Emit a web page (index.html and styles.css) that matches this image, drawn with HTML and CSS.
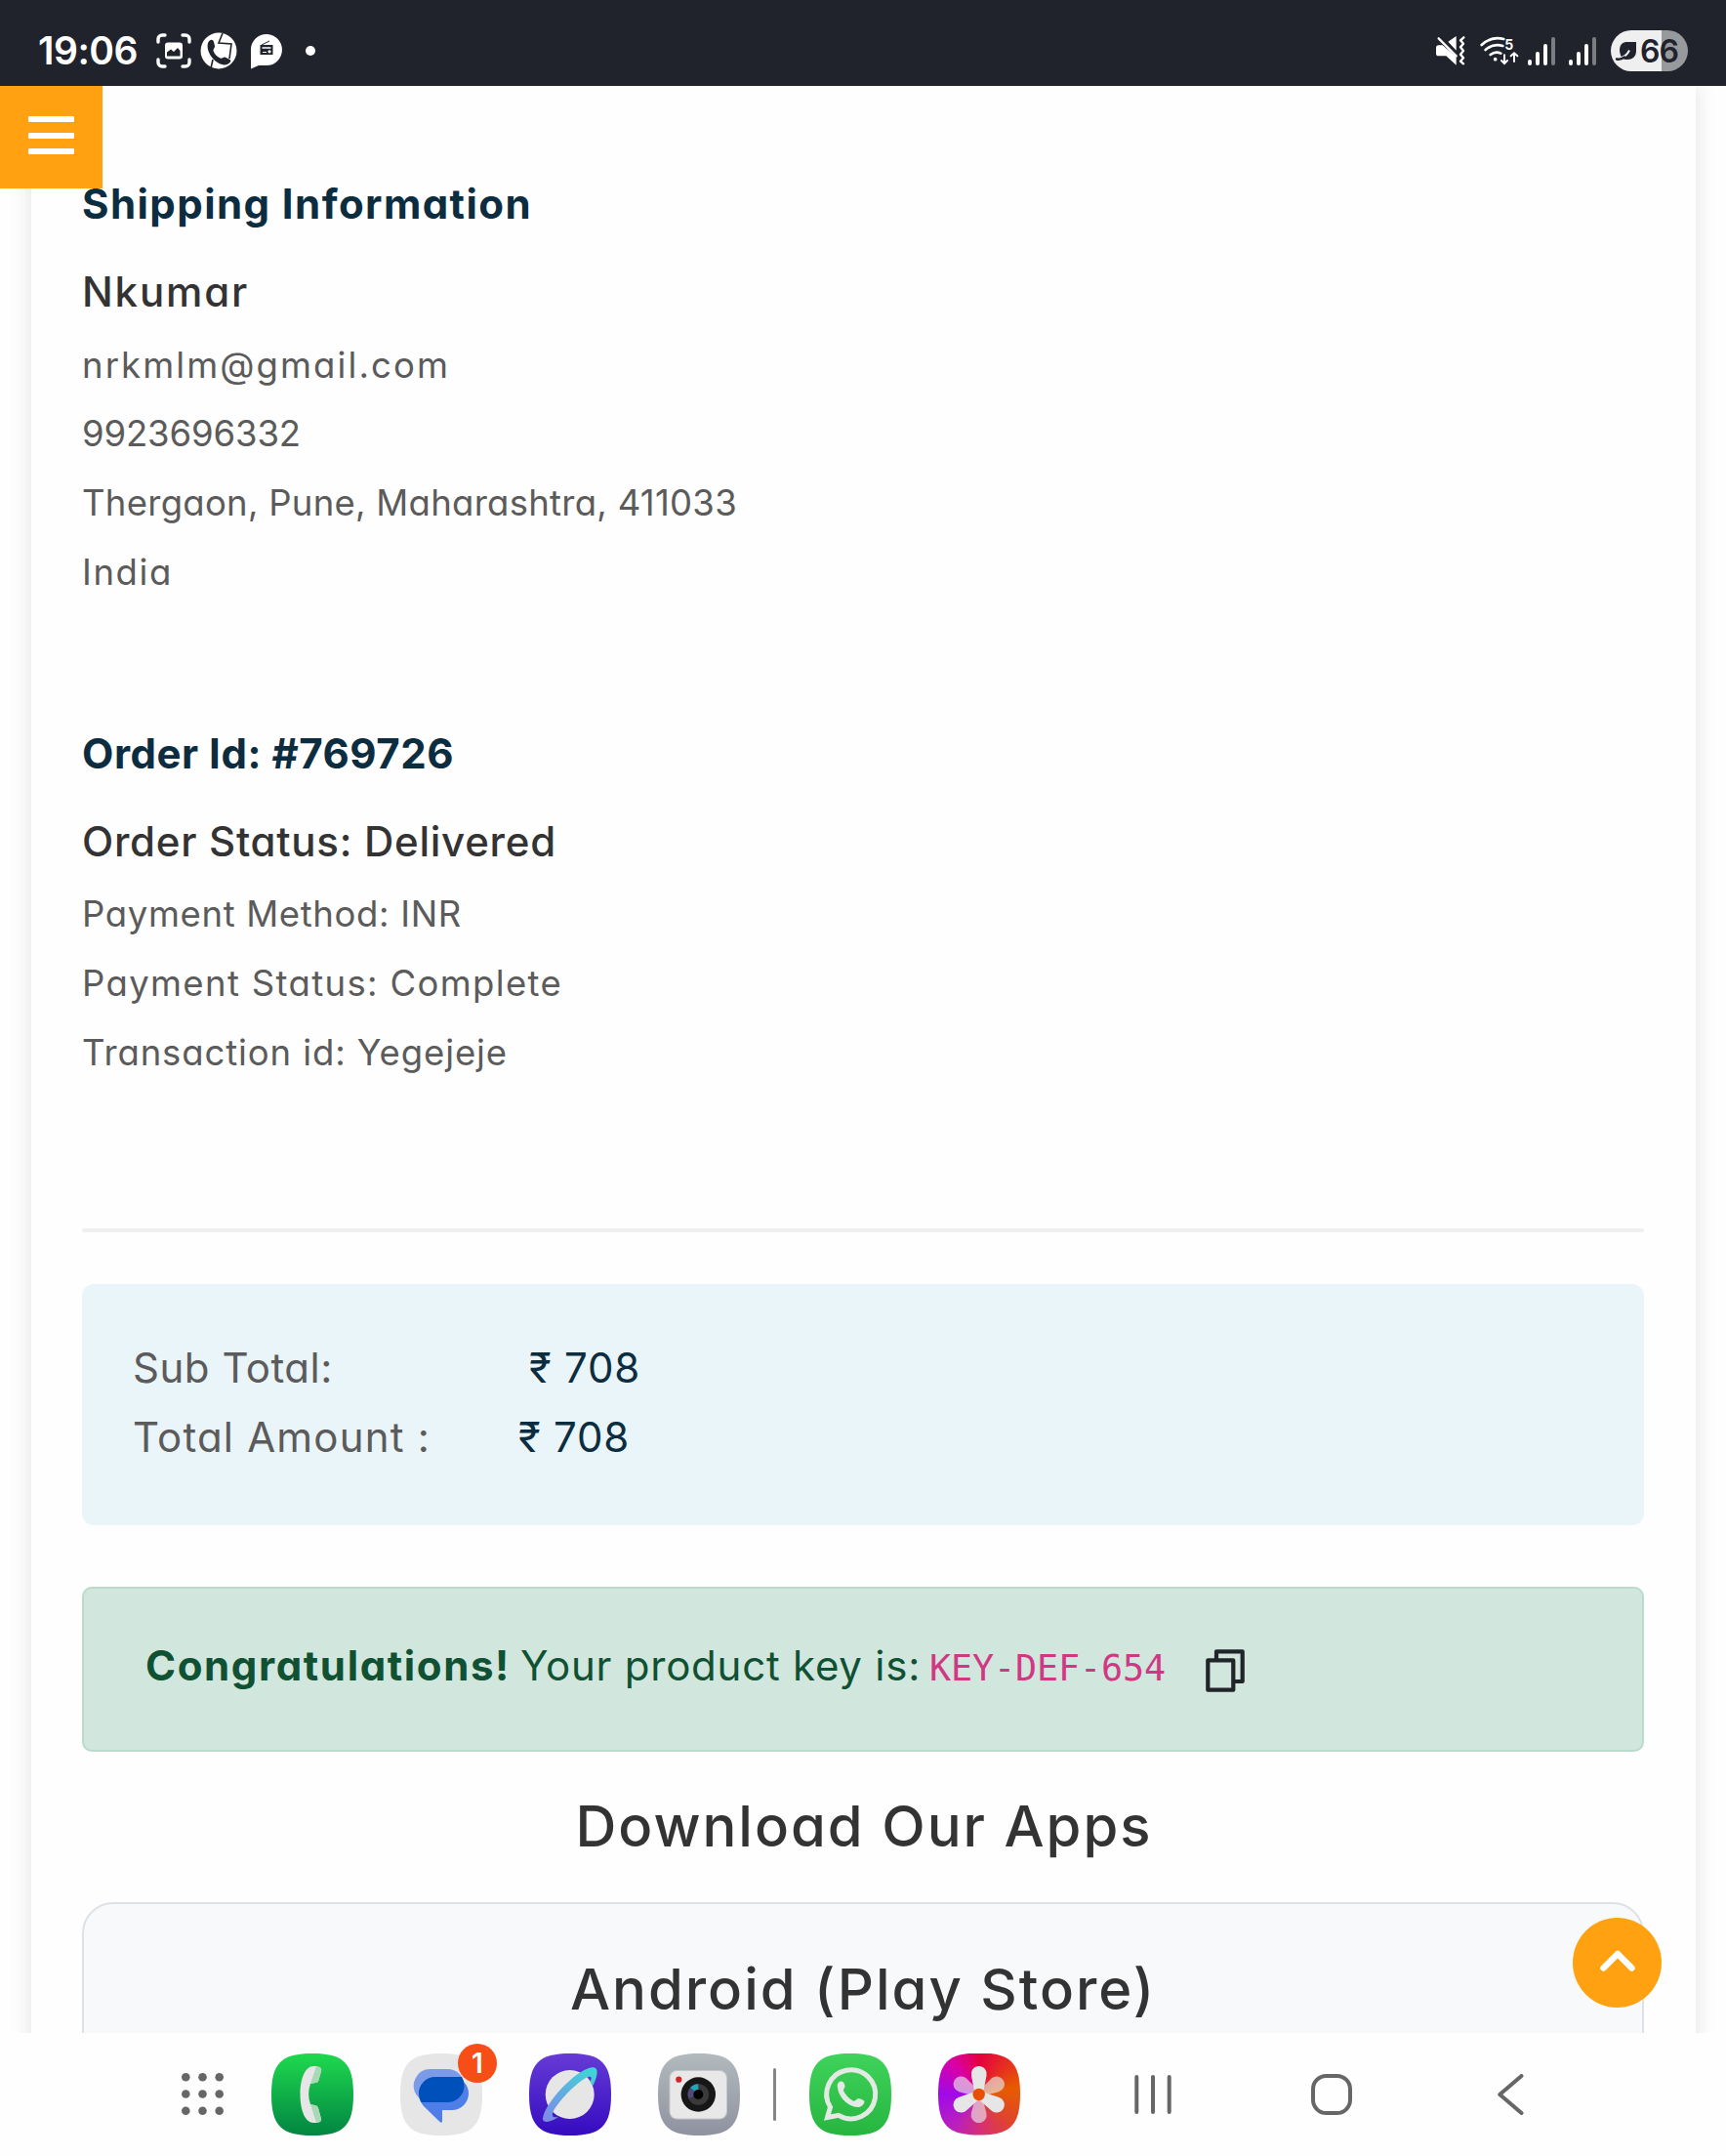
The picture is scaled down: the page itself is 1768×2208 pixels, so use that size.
FILE: index.html
```
<!DOCTYPE html>
<html lang="en">
<head>
<meta charset="utf-8">
<title>Order Details</title>
<link rel="stylesheet" href="styles.css">
</head>
<body>
<header class="status-bar">
  <div class="status-left">
    <span class="clock">19:06</span>
    <svg class="capture" width="36" height="36" viewBox="0 0 36 36" fill="none" stroke="#fff" stroke-width="3.4" stroke-linecap="round">
      <path d="M2 9V6a4 4 0 0 1 4-4h3M27 2h3a4 4 0 0 1 4 4v3M34 27v3a4 4 0 0 1-4 4h-3M9 34H6a4 4 0 0 1-4-4v-3"/>
      <rect x="9" y="9.500" width="18" height="17" rx="3" fill="#fff" stroke="none"/>
      <path d="M11 23.500v-4l4-3 3 2.500 4-4 2.500 3v5.500z" fill="#20222c" stroke="none"/>
    </svg>
    <svg class="call" width="38" height="38" viewBox="0 0 38 38">
      <circle cx="19" cy="19" r="18.500" fill="#fff"/>
      <path d="M8 11c2-4 5-4 6-1l1 4c.5 2-2 3-1.500 5 1.500 4 4 6 7 7.500 2 1 3-1.500 5-1l5 2.500c2 1 0 4-3 5C19 36 5 22 8 11z" fill="#20222c"/>
      <path d="M23 1l-4 10 13 1-2 15M13 28l-2 9" fill="none" stroke="#20222c" stroke-width="1.600"/>
    </svg>
    <svg class="radio" width="34" height="37" viewBox="0 0 34 37">
      <path d="M1 36.500V16A16 16 0 1 1 17 33H9z" fill="#fff"/>
      <path d="M10.500 12h13v10h-13z" fill="#20222c"/>
      <path d="M12 12l8-4" stroke="#20222c"/>
      <path d="M12.500 15h9" stroke="#fff" stroke-width="1.500"/>
      <circle cx="20" cy="18.800" r="1.600" fill="#fff"/><path d="M13 19.500h4" stroke="#fff"/>
    </svg>
    <span class="more-dot"></span>
  </div>
  <div class="status-right">
    <svg class="mute" width="30" height="30" viewBox="93 110 90 90" fill="#fff">
      <path d="M130 127l25-17v44zM93 146q0-8 8-8h12l42 36v25l-31-28h-23q-8 0-8-8z"/>
      <path d="M106 112l56 54" stroke="#20222c" stroke-width="5"/>
      <path d="M101 117l54 54" stroke="#fff" stroke-width="7" stroke-linecap="round"/>
      <path d="M178 114l-10 9 9 10-9 11 9 11-9 11 9 11-9 10 9 8" fill="none" stroke="#fff" stroke-width="7" stroke-linecap="round" stroke-linejoin="round"/>
    </svg>
    <svg class="wifi" width="40" height="30" viewBox="228 112 120 90" fill="none" stroke="#fff" stroke-width="8" stroke-linecap="round">
      <path d="M233 139q30-28 68-18M245 154q24-21 53-12M260 169q16-12 32-4"/>
      <circle cx="275" cy="183" r="5.500" fill="#fff" stroke="none"/>
      <path d="M303 170v25m-9-8l9 9 9-9M333 190v-26m-10 9l10-9 10 9" stroke-width="6"/>
      <text x="304" y="153" class="wifi-gen">5</text>
    </svg>
    <svg class="signal" width="28" height="29" viewBox="0 0 28 29" stroke="#fff" stroke-width="4" stroke-linecap="round">
      <path d="M2 25v2M10 17v10M18 9v18"/><path d="M26 2v25" stroke="#7c7d83"/>
    </svg>
    <svg class="signal second" width="28" height="29" viewBox="0 0 28 29" stroke="#fff" stroke-width="4" stroke-linecap="round">
      <path d="M2 25v2M10 17v10M18 9v18"/><path d="M26 2v25" stroke="#7c7d83"/>
    </svg>
    <div class="battery">
      <svg width="23" height="21" viewBox="0 0 23 21">
        <path d="M22 1v9c0 6-4 9-9 9-2 0-4-.5-5.500-1.500C4 12 3 1 13 1z" fill="#20222c"/>
        <path d="M4 17.500c5-.5 9-3.500 11-8" fill="none" stroke="#efefef" stroke-width="2"/>
        <path d="M2 18.500c3 .5 6-.5 8-2" fill="none" stroke="#20222c" stroke-width="2.500" stroke-linecap="round"/>
      </svg>
      <span>66</span>
    </div>
  </div>
</header>

<main class="viewport">
  <button class="menu-button" aria-label="Menu"><i></i><i></i><i></i></button>
  <div class="panel">
    <section class="info">
      <h2 class="title shipping">Shipping Information</h2>
      <h3 class="subtitle name">Nkumar</h3>
      <p class="email">nrkmlm@gmail.com</p>
      <p class="phone">9923696332</p>
      <p class="address">Thergaon, Pune, Maharashtra, 411033</p>
      <p class="country">India</p>
    </section>
    <section class="info order">
      <h2 class="title order-id">Order Id: #769726</h2>
      <h3 class="subtitle order-status">Order Status: Delivered</h3>
      <p class="method">Payment Method: INR</p>
      <p class="payment">Payment Status: Complete</p>
      <p class="transaction">Transaction id: Yegejeje</p>
    </section>
    <hr>
    <section class="totals">
      <div class="row"><span class="label sub">Sub Total:</span><span class="amount">₹ 708</span></div>
      <div class="row"><span class="label total">Total Amount :</span><span class="amount">₹ 708</span></div>
    </section>
    <section class="alert">
      <strong>Congratulations!</strong>
      <span class="message">Your product key is:</span>
      <code>KEY-DEF-654</code>
      <svg class="copy" width="40" height="44" viewBox="0 0 40 44" fill="none" stroke="#212529" stroke-width="4.200" stroke-linejoin="round">
        <path d="M11 10V2.300h26.700V33H29"/><path d="M2.300 11.300h26v30.400h-26z"/>
      </svg>
    </section>
    <h2 class="apps-title">Download Our Apps</h2>
    <section class="app-card"><h2>Android (Play Store)</h2></section>
  </div>
  <button class="to-top" aria-label="Back to top">
    <svg width="38" height="24" viewBox="0 0 38 24" fill="none" stroke="#fff" stroke-width="6.400" stroke-linecap="round" stroke-linejoin="round"><path d="M4.500 19.500L19 5l14.500 14.500"/></svg>
  </button>
</main>

<nav class="dock">
  <svg class="apps" width="43" height="43" viewBox="0 0 43 43" fill="#666">
    <circle cx="4.300" cy="4.300" r="4.300"/><circle cx="21.500" cy="4.300" r="4.300"/><circle cx="38.700" cy="4.300" r="4.300"/>
    <circle cx="4.300" cy="21.500" r="4.300"/><circle cx="21.500" cy="21.500" r="4.300"/><circle cx="38.700" cy="21.500" r="4.300"/>
    <circle cx="4.300" cy="38.700" r="4.300"/><circle cx="21.500" cy="38.700" r="4.300"/><circle cx="38.700" cy="38.700" r="4.300"/>
  </svg>
  <svg class="app" viewBox="0 0 84 84">
    <defs><linearGradient id="green" x2="0" y2="1"><stop stop-color="#1fd94e"/><stop offset="1" stop-color="#018542"/></linearGradient></defs>
    <path d="M0 42C0 10 10 0 42 0S84 10 84 42 74 84 42 84 0 74 0 42z" fill="url(#green)"/>
    <path d="M43 13C35 13 29.500 25 29.500 42S35 71 43 71c5 .5 8.500-1 8-4l-3-11c-.5-2-2-3-4-3l-4-1c-2.500-7-2.500-14 0-21l5-1c2 0 3-1 3.500-3L51 18c1-3-2-5-8-5z" fill="#e6e6e6"/>
    <path d="M46 13.300c4 .2 6 1.700 5 4.700l-2.500 9c-.5 2-1.500 3-3.500 3l-5 1zM40 52l4 1c2 0 3.500 1 4 3l3 11c.5 2-1 3.500-5 3.900z" fill="#a8d8b5"/>
  </svg>
  <div class="badged">
    <svg class="app" viewBox="0 0 84 84">
      <path d="M0 42C0 10 10 0 42 0S84 10 84 42 74 84 42 84 0 74 0 42z" fill="#e6e6e6"/>
      <path d="M31 16h17.500a17 17 0 0 1 17 17v17H24L17 43a17 17 0 0 1 14-27z" fill="#7b9be8"/>
      <path d="M36 24h17a17 17 0 0 1 0 34H43v11q0 3-2.500 1L24 54q-5-6-5-13a17 17 0 0 1 17-17z" fill="#4f7ee8"/>
      <path d="M36 24h27q2.500 4 2.500 9a17 17 0 0 1-17 17H21.500Q19 46 19 41a17 17 0 0 1 17-17z" fill="#0050bb"/>
    </svg>
    <span class="badge">1</span>
  </div>
  <svg class="app" viewBox="0 0 84 84">
    <defs>
      <linearGradient id="violet" x2="0" y2="1"><stop stop-color="#663bd6"/><stop offset="1" stop-color="#350bc0"/></linearGradient>
      <linearGradient id="ring" x1="0" y1="1" x2="1" y2="0"><stop stop-color="#8186e8"/><stop offset="1" stop-color="#38dcd4"/></linearGradient>
    </defs>
    <path d="M0 42C0 10 10 0 42 0S84 10 84 42 74 84 42 84 0 74 0 42z" fill="url(#violet)"/>
    <circle cx="41.700" cy="42" r="25" fill="#e6e6e6"/>
    <path d="M14.500 64C18 50 46 18 64 14.300c7-1 7.500 6 1.500 18.500L62.500 29c2.500-5 .5-6.500-3.500-4.500C48 30 29 50 24.500 60c-2 5 1 6.500 6 4.500l-2 1.500C19 71.500 12 71.500 14.500 64z" fill="url(#ring)"/>
  </svg>
  <svg class="app" viewBox="0 0 84 84">
    <defs><linearGradient id="steel" x2="0" y2="1"><stop stop-color="#b2babd"/><stop offset="1" stop-color="#8f929f"/></linearGradient></defs>
    <path d="M0 42C0 10 10 0 42 0S84 10 84 42 74 84 42 84 0 74 0 42z" fill="url(#steel)"/>
    <rect x="11.500" y="17" width="59.500" height="50.500" rx="8" fill="#c4c8cc"/>
    <rect x="12.500" y="18" width="57.500" height="48.500" rx="7" fill="#e8e8e8"/>
    <circle cx="21.300" cy="26.700" r="3.100" fill="#d3262c"/>
    <circle cx="41.300" cy="42" r="17.700" fill="#171718"/>
    <circle cx="41.300" cy="42" r="10.800" fill="#3b393c"/>
    <path d="M41.300 42V31.200A10.800 10.800 0 0 0 33 35z" fill="#1ea8bb"/>
    <path d="M41.300 42L33 35a10.800 10.800 0 0 0-1.500 11z" fill="#504a78"/>
    <circle cx="41.300" cy="42" r="5" fill="#000"/>
  </svg>
  <span class="divider"></span>
  <svg class="app" viewBox="0 0 84 84">
    <defs><linearGradient id="lime" x2="0" y2="1"><stop stop-color="#3fd35b"/><stop offset="1" stop-color="#27b53f"/></linearGradient></defs>
    <path d="M0 42C0 10 10 0 42 0S84 10 84 42 74 84 42 84 0 74 0 42z" fill="url(#lime)"/>
    <path d="M18.500 65.500l3-10.500A25 25 0 1 1 30 63.300z" fill="none" stroke="#e2eae3" stroke-width="5"/>
    <path d="M29 35c-1-4 1-6.500 4-6.500 2 0 3 2.500 3.500 4.500s-2 3.500-1.500 5c2 4.500 6 8.500 10 10.500 2 1 3.500-2.500 5.500-2.500 2 .3 5.500 2 6 3-.5 4-4 6-7 6C40 54.500 30 45 29 35z" fill="#e2eae3"/>
  </svg>
  <div class="app gallery">
    <svg class="app" viewBox="0 0 84 84" fill="#e6e6e6">
      <g fill-opacity=".65">
        <path d="M38 38l-4-15a8 8 0 1 1 15.500 0l-4 15z" transform="rotate(60 41.700 42)"/>
        <path d="M38 38l-4-15a8 8 0 1 1 15.500 0l-4 15z" transform="rotate(180 41.700 42)"/>
        <path d="M38 38l-4-15a8 8 0 1 1 15.500 0l-4 15z" transform="rotate(300 41.700 42)"/>
      </g>
      <path d="M37 38l-3-15a8 8 0 1 1 15.500 0l-3 15z"/>
      <path d="M37 38l-3-15a8 8 0 1 1 15.500 0l-3 15z" transform="rotate(120 41.700 42)"/>
      <path d="M37 38l-3-15a8 8 0 1 1 15.500 0l-3 15z" transform="rotate(240 41.700 42)"/>
      <circle cx="41.700" cy="42" r="6.200" fill="#e65000"/>
    </svg>
  </div>
  <svg class="recents" width="38" height="40" viewBox="0 0 38 40" stroke="#666" stroke-width="4" stroke-linecap="round"><path d="M2.300 2v36M19 2v36M35.700 2v36"/></svg>
  <svg class="home" width="42" height="42" viewBox="0 0 42 42" fill="none" stroke="#666" stroke-width="4"><rect x="2" y="2" width="38" height="38" rx="13.500"/></svg>
  <svg class="back" width="27" height="42" viewBox="0 0 27 42" fill="none" stroke="#666" stroke-width="4" stroke-linecap="round" stroke-linejoin="round"><path d="M24.500 2L2.300 21l22.200 19"/></svg>
</nav>
</body>
</html>
```
FILE: styles.css
```
* { box-sizing: border-box; }

body {
  margin: 0;
  width: 1768px;
  height: 2208px;
  display: flex;
  flex-direction: column;
  overflow: hidden;
  background: #fefefe;
  font-family: Inter, "Noto Sans", sans-serif;
  font-feature-settings: "cv11";
  color: #333;
}

h2, h3, p { margin: 0; white-space: nowrap; }
svg { display: block; flex: none; }
button { border: 0; padding: 0; background: #ffa110; }

/* Status bar */
.status-bar {
  flex: none;
  height: 88px;
  padding: 16px 39px 0 39px;
  display: flex;
  align-items: center;
  justify-content: space-between;
  background: #20222c;
  color: #fff;
}
.status-left, .status-right { display: flex; align-items: center; }
.clock { width: 121px; font-size: 39px; font-weight: 600; line-height: 40px; letter-spacing: -0.5px; }
.call { margin-left: 9px; }
.radio { margin-left: 13px; }
.more-dot { width: 10px; height: 10px; margin-left: 23px; border-radius: 50%; background: #fff; }
.wifi { margin-left: 15px; }
.wifi-gen { font: 700 42px Inter, sans-serif; fill: #fff; stroke: none; }
.signal { margin-left: 9px; }
.second { margin-left: 14px; }
.battery {
  width: 79px;
  height: 42px;
  margin-left: 15px;
  padding-left: 4px;
  display: flex;
  align-items: center;
  gap: 3px;
  border-radius: 21px;
  background: linear-gradient(90deg, #efefef 52px, #98999d 52px);
  color: #20222c;
  font-size: 32px;
  font-weight: 600;
  letter-spacing: -1px;
}

/* Page */
.viewport { position: relative; flex: 1; min-height: 0; overflow: hidden; }
.menu-button {
  position: absolute;
  z-index: 2;
  left: 0;
  top: 0;
  width: 105px;
  height: 105px;
  padding: 31px 29px 35px;
  display: flex;
  flex-direction: column;
  justify-content: space-between;
}
.menu-button i { height: 6px; border-radius: 1px; background: #fff; }
.panel {
  height: 2100px;
  margin: 0 31px 0 32px;
  padding: 89px 53px 0 52px;
  background: #fefefe;
  box-shadow: 0 0 20px rgba(40, 40, 80, 0.13);
}

.info { color: #5b5b5b; font-size: 36.5px; line-height: 70.7px; }
.order { margin-top: 118.5px; }
.title { margin-bottom: 26px; font-size: 42px; line-height: 64px; font-weight: 700; color: #0c2d3f; }
.subtitle { margin-bottom: 7.5px; font-size: 42px; line-height: 64px; font-weight: 500; color: #333; }
.shipping { letter-spacing: 1.43px; }
.name { letter-spacing: 1.83px; }
.email { letter-spacing: 2.09px; }
.phone { letter-spacing: -0.14px; }
.address { letter-spacing: 0.27px; }
.country { letter-spacing: 1.62px; }
.order-id { letter-spacing: 0.52px; }
.order-status { letter-spacing: 0.73px; }
.method { letter-spacing: 0.65px; }
.payment { letter-spacing: 1.35px; }
.transaction { letter-spacing: 0.89px; }

hr { height: 4px; margin: 145px 0 53px; border: 0; border-radius: 2px; background: #efeff0; }

.totals {
  height: 247px;
  padding: 50px 52px 0;
  border-radius: 12px;
  background: #eaf5fa;
  font-size: 42px;
  line-height: 71px;
}
.row { display: flex; white-space: nowrap; }
.label { color: #5b5b5b; }
.sub { width: 406px; letter-spacing: 0.53px; }
.total { width: 395px; letter-spacing: 1.19px; }
.amount { color: #0c2d3f; letter-spacing: 0.78px; }

.alert {
  height: 169px;
  margin-top: 63px;
  padding: 0 63px 8px;
  display: flex;
  align-items: center;
  border: 2px solid #badbcc;
  border-radius: 10px;
  background: #d1e7dd;
  color: #0f5132;
  font-size: 42px;
  line-height: 64px;
  white-space: nowrap;
}
.alert strong { width: 384px; font-weight: 700; letter-spacing: 1.63px; }
.message { width: 419px; letter-spacing: 0.77px; }
.alert code { width: 283px; margin-top: 7px; color: #d03884; font-family: "DejaVu Sans Mono", monospace; font-size: 36.75px; letter-spacing: -0.13px; }
.copy { margin-top: 10px; }

.apps-title, .app-card h2 { font-size: 58px; line-height: 80px; font-weight: 500; text-align: center; color: #333; letter-spacing: 2px; }
.apps-title { margin-top: 36px; padding-left: 2px; }
.app-card {
  height: 400px;
  margin-top: 38px;
  padding-top: 47px;
  border: 2px solid #dee1e6;
  border-radius: 32px;
  background: #f8f9fb;
}
.to-top {
  position: absolute;
  left: 1611px;
  top: 1876px;
  width: 91px;
  height: 92px;
  display: flex;
  align-items: center;
  justify-content: center;
  padding-bottom: 4px;
  border-radius: 50%;
}

/* Dock */
.dock {
  flex: none;
  height: 126px;
  padding: 0 0 1px 186px;
  display: flex;
  align-items: center;
  background: #fefefe;
}
.app { width: 84px; height: 84px; margin-left: 48px; }
.apps + .app { margin-left: 49px; }
.badged { position: relative; margin-left: 48px; }
.badged .app { margin: 0; }
.badge {
  position: absolute;
  left: 59px;
  top: -10px;
  width: 40px;
  height: 40px;
  border-radius: 50%;
  background: #f64e16;
  color: #fff;
  font-size: 28px;
  font-weight: 600;
  line-height: 40px;
  text-align: center;
}
.divider { width: 3px; height: 54px; margin-left: 34px; border-radius: 2px; background: #858585; }
.divider + .app { margin-left: 34px; }
.gallery {
  clip-path: path("M0 42C0 10 10 0 42 0S84 10 84 42 74 84 42 84 0 74 0 42z");
  background: conic-gradient(#e50040, #e5202a 30deg, #e65c00 80deg, #e0452a 130deg, #d83070 175deg, #b81fc0 220deg, #a00ae8 270deg, #d800a8 320deg, #e50040);
}
.gallery .app { margin: 0; }
.recents { margin-left: 117px; }
.home { margin-left: 143px; }
.back { margin-left: 149px; }
```
